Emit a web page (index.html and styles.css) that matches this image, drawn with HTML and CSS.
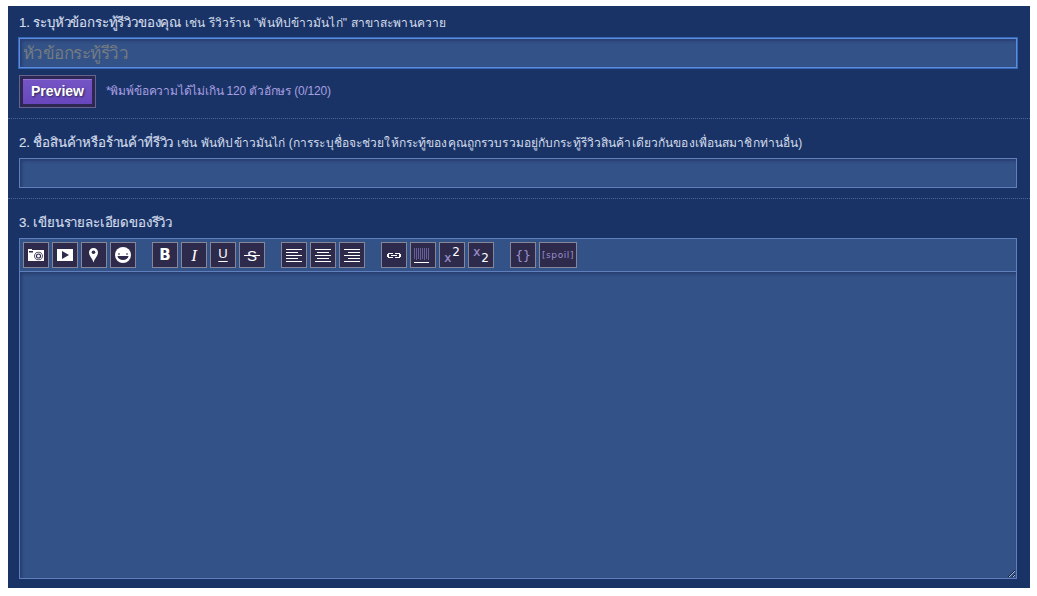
FILE: index.html
```html
<!DOCTYPE html>
<html lang="th">
	<head>
		<title>Review</title>
		<meta charset="utf-8" />
		<link rel="stylesheet" href="styles.css">
	</head>
	<body>
		<form class="post-form">
			<div class="section section-topic">
				<label class="title" for="topic"><span class="name">1. ระบุหัวข้อกระทู้รีวิวของคุณ</span> <span class="example">เช่น รีวิวร้าน "พันทิปข้าวมันไก่" สาขาสะพานควาย</span></label>
				<input type="text" class="text-input focused" id="topic" placeholder="หัวข้อกระทู้รีวิว">
				<div class="actions">
					<div class="button-container"><button type="button" class="preview-btn">Preview</button></div>
					<span class="note">*พิมพ์ข้อความได้ไม่เกิน 120 ตัวอักษร (0/120)</span>
				</div>
			</div>

			<div class="section section-product">
				<label class="title" for="product"><span class="name">2. ชื่อสินค้าหรือร้านค้าที่รีวิว</span> <span class="example">เช่น พันทิปข้าวมันไก่ (การระบุชื่อจะช่วยให้กระทู้ของคุณถูกรวบรวมอยู่กับกระทู้รีวิวสินค้าเดียวกันของเพื่อนสมาชิกท่านอื่น)</span></label>
				<input type="text" class="text-input" id="product">
			</div>

			<div class="section section-detail">
				<label class="title" for="detail"><span class="name">3. เขียนรายละเอียดของรีวิว</span></label>
				<div class="editor">
					<div class="toolbar">
						<div class="tool-group">
							<button type="button" class="tool"><svg viewBox="0 0 24 24"><path class="fill" d="M4 6h4v1h12v11H4z"/><path class="hole" d="M5 8h4v1.500H5z"/><circle class="hole" cx="14.500" cy="13" r="4.300"/><circle class="fill" cx="14.500" cy="13" r="3.500"/><circle class="hole" cx="14.500" cy="13" r="2.600"/><circle class="fill" cx="14.500" cy="13" r="1.500"/></svg></button>
							<button type="button" class="tool"><svg viewBox="0 0 24 24"><path class="fill" d="M4 6h16v12H4z"/><path class="hole" d="M9 8v8l7-4z"/></svg></button>
							<button type="button" class="tool"><svg viewBox="0 0 24 24"><path class="fill" d="M11.500 19.500C10.500 15.500 7 13 7 9.500a4.500 4.500 0 0 1 9 0c0 3.500-3.500 6-4.500 10z"/><circle class="hole" cx="11.500" cy="9.300" r="1.800"/></svg></button>
							<button type="button" class="tool"><svg viewBox="0 0 24 24"><circle class="fill" cx="12" cy="12" r="8"/><path class="hole" d="M7 10.500h2v1H7zM15 10.500h2v1h-2zM6.500 13h11a5.500 4 0 0 1-11 0z"/></svg></button>
						</div>
						<div class="tool-group">
							<button type="button" class="tool tool-bold">B</button>
							<button type="button" class="tool tool-italic">I</button>
							<button type="button" class="tool tool-underline">U</button>
							<button type="button" class="tool tool-strike"><span>S</span></button>
						</div>
						<div class="tool-group">
							<button type="button" class="tool"><svg viewBox="0 0 24 24"><path class="fill" d="M4 6h16v1H4zM4 9h12v1H4zM4 12h16v1H4zM4 15h12v1H4zM4 18h16v1H4z"/></svg></button>
							<button type="button" class="tool"><svg viewBox="0 0 24 24"><path class="fill" d="M4 6h16v1H4zM6 9h12v1H6zM4 12h16v1H4zM6 15h12v1H6zM4 18h16v1H4z"/></svg></button>
							<button type="button" class="tool"><svg viewBox="0 0 24 24"><path class="fill" d="M4 6h16v1H4zM8 9h12v1H8zM4 12h16v1H4zM8 15h12v1H8zM4 18h16v1H4z"/></svg></button>
						</div>
						<div class="tool-group">
							<button type="button" class="tool"><svg viewBox="0 0 24 24"><path class="fill" d="M6 10h4v1H7v3h3v1H6v-1H5v-3h1zM14 10h4v1h1v3h-1v1h-4v-1h3v-3h-3zM9 12h6v1H9zM10 10h1v1h-1zM10 14h1v1h-1zM13 10h1v1h-1zM13 14h1v1h-1z"/></svg></button>
							<button type="button" class="tool"><svg viewBox="0 0 24 24"><path class="bars" d="M3 5h1v11H3zM5 5h1v12H5zM7 5h1v11H7zM9 5h1v12H9zM11 5h1v11h-1zM13 5h1v12h-1zM15 5h1v11h-1zM17 5h1v12h-1z"/><path class="fill" d="M3 19h15v1H3z"/></svg></button>
							<button type="button" class="tool tool-script"><span class="base low">x</span><span class="digit high">2</span></button>
							<button type="button" class="tool tool-script"><span class="base high">x</span><span class="digit low">2</span></button>
						</div>
						<div class="tool-group">
							<button type="button" class="tool tool-code">{}</button>
							<button type="button" class="tool tool-spoil">[spoil]</button>
						</div>
					</div>
					<textarea class="detail" id="detail"></textarea>
				</div>
			</div>
		</form>
	</body>
</html>
```
FILE: styles.css
```css
* {
	box-sizing: border-box;
}

body {
	background: #fff;
	margin: 0;
	padding: 6px 7px 8px 8px;
	font-family: "Liberation Sans", Arial, sans-serif;
	color: #d2dbea;
	overflow: hidden;
}

.post-form {
	height: 582px;
	background: #193366;
	display: flex;
	flex-direction: column;
}

.section {
	padding: 0 13px 0 11px;
	border-bottom: 1px dotted #49659a;
}

.section-topic {
	height: 113px;
}

.section-product {
	height: 80px;
}

.section-detail {
	flex: 1;
	border-bottom: none;
}

.title {
	display: flex;
	align-items: baseline;
	gap: 4px;
	height: 32px;
	padding-top: 9px;
	line-height: 16px;
	white-space: nowrap;
}

.section-product .title,
.section-detail .title {
	height: 39px;
	padding-top: 16px;
}

.name {
	font-size: 13.3px;
	letter-spacing: -0.17px;
	-webkit-text-stroke: 0.15px #d2dbea;
}

.example {
	font-size: 12px;
	letter-spacing: 0.12px;
}

.text-input {
	display: block;
	width: 100%;
	height: 30px;
	margin: 0;
	padding: 2px 3px 0;
	background: #335287;
	border: 1px solid #5f7fbd;
	box-shadow: inset 2px 2px 3px rgba(25, 40, 90, 0.5);
	font-family: inherit;
	font-size: 17px;
	letter-spacing: -0.55px;
	color: #fff;
	outline: none;
}

.text-input::placeholder {
	color: #737b83;
}

.text-input.focused {
	border-color: #5b8ce0;
	box-shadow: inset 2px 2px 3px rgba(25, 40, 90, 0.5), 0 0 0 1px #3768b6;
}

.actions {
	display: flex;
	align-items: center;
	gap: 10px;
	padding-top: 7px;
}

.button-container {
	width: 77px;
	height: 33px;
	padding: 3px;
	background: #2c2853;
	border: 1px solid #66638c;
}

.preview-btn {
	display: block;
	width: 69px;
	height: 25px;
	padding: 0 0 2px;
	border: none;
	border-top: 1px solid #9274d4;
	background: linear-gradient(#7555c5, #6846bd);
	font: bold 14px "Liberation Sans", Arial, sans-serif;
	color: #fff;
	text-shadow: 1px 1px 2px #2c2853;
}

.note {
	padding-bottom: 2px;
	font-size: 12px;
	letter-spacing: -0.19px;
	color: #a79fe0;
	white-space: nowrap;
}

.editor {
	height: 341px;
	display: flex;
	flex-direction: column;
	background: #335287;
	border: 1px solid #5f7fbd;
}

.toolbar {
	display: flex;
	gap: 16px;
	height: 33px;
	padding: 3px;
	border-bottom: 1px solid #5f7fbd;
}

.tool-group {
	display: flex;
	gap: 3px;
}

.tool {
	display: flex;
	align-items: center;
	justify-content: center;
	width: 26px;
	height: 26px;
	padding: 0;
	background: #2d2a4b;
	border: 1px solid #85869a;
	font-family: "Liberation Sans", Arial, sans-serif;
	color: #fff;
}

.tool svg {
	width: 24px;
	height: 24px;
}

.fill {
	fill: #fff;
}

.hole {
	fill: #2d2a4b;
}

.bars {
	fill: #665e96;
}

.tool-bold {
	padding-bottom: 1px;
	font: bold 15px "DejaVu Sans", sans-serif;
}

.tool-italic {
	padding-top: 1px;
	font: italic 17px "Liberation Serif", serif;
}

.tool-underline {
	padding-bottom: 3px;
	font-size: 13px;
	text-decoration: underline;
	text-underline-offset: 3px;
}

.tool-strike {
	font-size: 15px;
}

.tool-strike span {
	padding: 0 3px;
	background: linear-gradient(#fff, #fff) 0 8px / 100% 1px no-repeat;
}

.tool-script {
	gap: 1px;
	font-family: "DejaVu Sans", sans-serif;
}

.base {
	font-size: 12px;
	color: #9c8fce;
	-webkit-text-stroke: 0.2px #9c8fce;
}

.digit {
	font-size: 12px;
}

.low {
	padding-top: 5px;
}

.high {
	padding-bottom: 6px;
}

.tool-code {
	font: 13px "DejaVu Sans Mono", monospace;
	color: #9c8fce;
}

.tool-spoil {
	width: 38px;
	font: 9px "DejaVu Sans", sans-serif;
	letter-spacing: 0.6px;
	color: #9c8fce;
}

.detail {
	flex: 1;
	margin: 0;
	border: none;
	outline: none;
	background: transparent;
	box-shadow: inset 2px 2px 3px rgba(25, 40, 90, 0.5);
	color: #fff;
}
```
